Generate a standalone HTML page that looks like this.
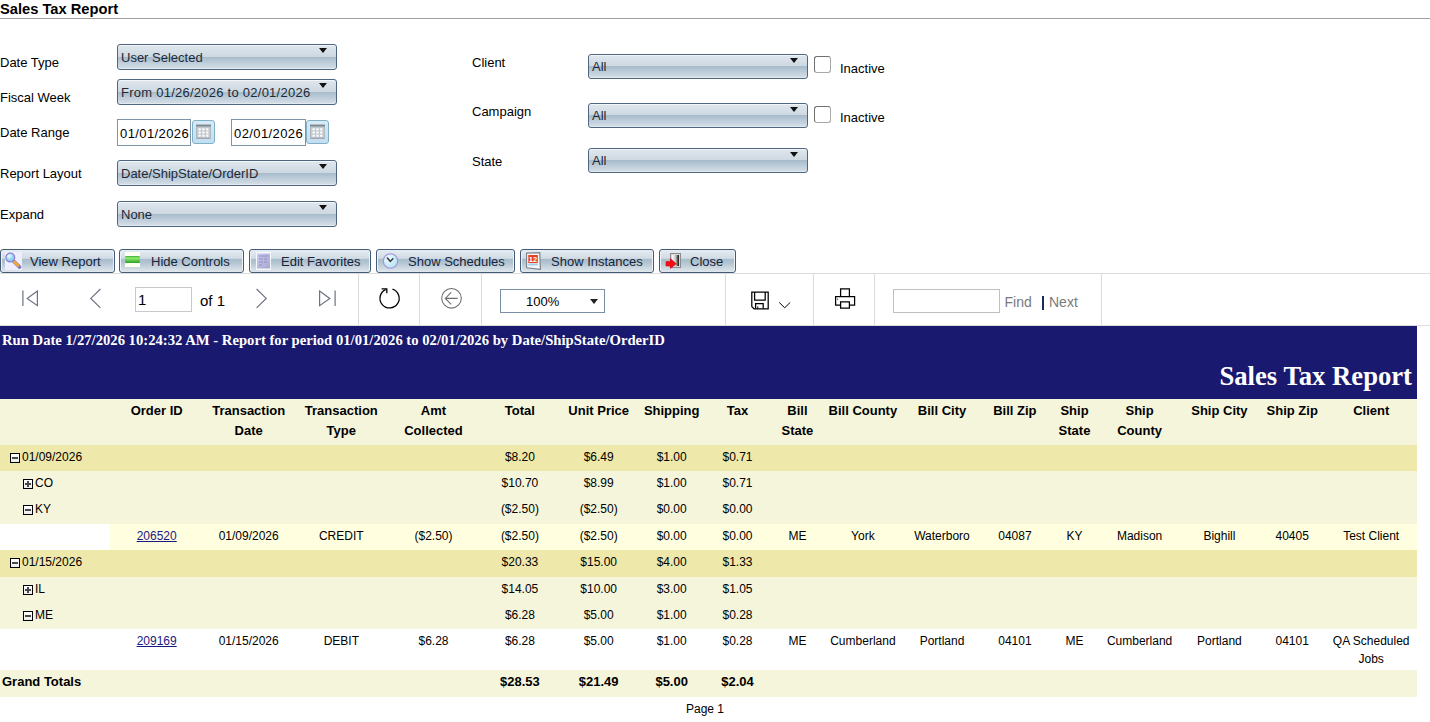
<!DOCTYPE html>
<html><head><meta charset="utf-8">
<style>
*{box-sizing:border-box;margin:0;padding:0}
html,body{width:1430px;height:722px;overflow:hidden;background:#fff;font-family:"Liberation Sans",sans-serif;color:#000}
.a{position:absolute}
.t{position:absolute;white-space:nowrap;line-height:1}
#title{left:0;top:2px;font-size:14.7px;font-weight:bold}
#hr{left:0;top:18px;width:1430px;height:1px;background:#a0a0a0}
.lbl{font-size:13px;color:#000}
.dd{position:absolute;height:26px;border:1px solid #4e6680;border-radius:3px;
 background:linear-gradient(#e0e7ee 0%,#cdd8e1 48%,#a7bbca 50%,#bfcedb 75%,#d5dfe7 100%);
 box-shadow:inset 0 1px 0 #f3f6f9, inset 0 -1px 0 #e3eaef;font-size:13px;color:#1e2a36}
.dd span{position:absolute;left:3px;top:6px;line-height:1;white-space:nowrap}
.dd.r{height:25px}.dd.r span{top:5px}
.dd i{position:absolute;right:9px;top:3px;width:0;height:0;border-left:4px solid transparent;border-right:4px solid transparent;border-top:5px solid #111}
.inp{position:absolute;height:27px;border:1px solid #7f93aa;background:#fff;font-size:13px}
.inp span{position:absolute;left:2px;top:7px;line-height:1;letter-spacing:0.4px}
.cal{position:absolute;width:23px;height:24px;border:1px solid #7fb0c9;border-radius:3px;background:linear-gradient(#d8eaf6,#c3def0)}
.cb{position:absolute;width:17px;height:17px;border:1px solid;border-color:#707070 #a8a8a8 #a8a8a8 #707070;border-radius:3px;background:#fff}
.btn{position:absolute;top:249px;height:24px;border:1px solid #435b76;border-radius:3px;
 background:linear-gradient(#e6ecf1 0%,#d0dbe4 38%,#a9bdcc 42%,#b2c4d2 58%,#d3dde5 88%,#e2e8ed 100%);box-shadow:inset 1px 0 0 #eef2f5, inset -1px 0 0 #eef2f5;font-size:13px;color:#16243a}
.btn span{position:absolute;top:5px;line-height:1;white-space:nowrap}
.sep{position:absolute;top:274px;width:1px;height:51px;background:#dcdcdc}
.row{position:absolute;left:0;width:1417px}
.c{position:absolute;width:120px;text-align:center;white-space:nowrap;line-height:1}
.hd{font-weight:bold;font-size:13px}
.dt{font-size:12px}
.ex{position:absolute;width:10px;height:10px;border:1px solid #000;background:linear-gradient(#fff,#ececec)}
.ex:before{content:"";position:absolute;left:1px;top:3px;width:6px;height:2px;background:#4a4a4a}
.ex.p:after{content:"";position:absolute;left:3px;top:1px;width:2px;height:6px;background:#4a4a4a}
</style></head><body>
<div id="title" class="t">Sales Tax Report</div>
<div id="hr" class="a"></div>

<!-- left labels -->
<div class="t lbl" style="left:0;top:56px">Date Type</div>
<div class="t lbl" style="left:0;top:91px">Fiscal Week</div>
<div class="t lbl" style="left:0;top:126px">Date Range</div>
<div class="t lbl" style="left:0;top:167px">Report Layout</div>
<div class="t lbl" style="left:0;top:208px">Expand</div>

<div class="dd" style="left:117px;top:44px;width:220px"><span>User Selected</span><i></i></div>
<div class="dd" style="left:117px;top:79px;width:220px"><span style="letter-spacing:0.25px">From 01/26/2026 to 02/01/2026</span><i></i></div>
<div class="inp" style="left:117px;top:119px;width:74px"><span>01/01/2026</span></div>
<div class="cal" style="left:192px;top:120px"><svg width="21" height="22" viewBox="0 0 21 22" style="position:absolute;left:0;top:0"><rect x="3" y="3.6" width="15" height="2.2" fill="#7c8690"/><rect x="3.5" y="5.8" width="14" height="11.5" fill="#c4cad0" stroke="#aab2ba" stroke-width="0.8"/><g fill="#fff"><rect x="5.5" y="7.3" width="2.3" height="2"/><rect x="9.3" y="7.3" width="2.3" height="2"/><rect x="13.1" y="7.3" width="2.3" height="2"/><rect x="5.5" y="10.5" width="2.3" height="2"/><rect x="9.3" y="10.5" width="2.3" height="2"/><rect x="13.1" y="10.5" width="2.3" height="2"/><rect x="5.5" y="13.7" width="2.3" height="2"/><rect x="9.3" y="13.7" width="2.3" height="2"/><rect x="13.1" y="13.7" width="2.3" height="2"/></g><path d="M3.5 17.3 H17.5" stroke="#98a2ac" stroke-width="1"/></svg></div>
<div class="inp" style="left:231px;top:119px;width:75px"><span>02/01/2026</span></div>
<div class="cal" style="left:306px;top:120px"><svg width="21" height="22" viewBox="0 0 21 22" style="position:absolute;left:0;top:0"><rect x="3" y="3.6" width="15" height="2.2" fill="#7c8690"/><rect x="3.5" y="5.8" width="14" height="11.5" fill="#c4cad0" stroke="#aab2ba" stroke-width="0.8"/><g fill="#fff"><rect x="5.5" y="7.3" width="2.3" height="2"/><rect x="9.3" y="7.3" width="2.3" height="2"/><rect x="13.1" y="7.3" width="2.3" height="2"/><rect x="5.5" y="10.5" width="2.3" height="2"/><rect x="9.3" y="10.5" width="2.3" height="2"/><rect x="13.1" y="10.5" width="2.3" height="2"/><rect x="5.5" y="13.7" width="2.3" height="2"/><rect x="9.3" y="13.7" width="2.3" height="2"/><rect x="13.1" y="13.7" width="2.3" height="2"/></g><path d="M3.5 17.3 H17.5" stroke="#98a2ac" stroke-width="1"/></svg></div>
<div class="dd" style="left:117px;top:160px;width:220px"><span>Date/ShipState/OrderID</span><i></i></div>
<div class="dd" style="left:117px;top:201px;width:220px"><span>None</span><i></i></div>

<!-- right labels -->
<div class="t lbl" style="left:472px;top:56px">Client</div>
<div class="t lbl" style="left:472px;top:105px">Campaign</div>
<div class="t lbl" style="left:472px;top:155px">State</div>
<div class="dd r" style="left:588px;top:54px;width:220px"><span>All</span><i></i></div>
<div class="dd r" style="left:588px;top:103px;width:220px"><span>All</span><i></i></div>
<div class="dd r" style="left:588px;top:148px;width:220px"><span>All</span><i></i></div>
<div class="cb" style="left:814px;top:56px"></div>
<div class="cb" style="left:814px;top:106px"></div>
<div class="t lbl" style="left:840px;top:62px">Inactive</div>
<div class="t lbl" style="left:840px;top:111px">Inactive</div>

<!-- buttons -->
<div class="btn" style="left:0;width:115px"><span style="left:29px">View Report</span></div>
<div class="btn" style="left:119px;width:125px"><span style="left:31px">Hide Controls</span></div>
<div class="btn" style="left:249px;width:122px"><span style="left:31px">Edit Favorites</span></div>
<div class="btn" style="left:376px;width:139px"><span style="left:31px">Show Schedules</span></div>
<div class="btn" style="left:520px;width:134px"><span style="left:30px">Show Instances</span></div>
<div class="btn" style="left:659px;width:77px"><span style="left:30px">Close</span></div>
<svg class="a" style="left:5px;top:252px" width="17" height="18" viewBox="0 0 17 18">
 <defs><radialGradient id="lg" cx="0.35" cy="0.3" r="0.8"><stop offset="0" stop-color="#f4fdff"/><stop offset="0.5" stop-color="#9fd8f4"/><stop offset="1" stop-color="#6cc0ea"/></radialGradient></defs>
 <rect width="17" height="18" fill="#eeeefd"/>
 <line x1="9" y1="9.5" x2="14.5" y2="15" stroke="#7c74c8" stroke-width="3.6" stroke-linecap="round"/>
 <line x1="9" y1="9.5" x2="13" y2="13.5" stroke="#f2a838" stroke-width="2.6" stroke-linecap="round"/>
 <circle cx="5.3" cy="5.6" r="4.4" fill="url(#lg)" stroke="#8a80d4" stroke-width="1.2"/>
</svg>
<svg class="a" style="left:125px;top:252px" width="15" height="15" viewBox="0 0 15 15">
 <defs><linearGradient id="gg" x1="0" y1="0" x2="0" y2="1"><stop offset="0" stop-color="#3cb030"/><stop offset="0.3" stop-color="#90ee70"/><stop offset="1" stop-color="#28a020"/></linearGradient></defs>
 <rect width="15" height="15" fill="#fffff2"/>
 <rect x="0" y="4" width="15" height="7" rx="1" fill="url(#gg)"/>
</svg>
<svg class="a" style="left:256px;top:252px" width="15" height="18" viewBox="0 0 15 18">
 <defs><linearGradient id="dg" x1="0" y1="0" x2="1" y2="1"><stop offset="0" stop-color="#c8c8f4"/><stop offset="1" stop-color="#a8a8cc"/></linearGradient></defs>
 <rect x="0" y="0" width="15" height="18" fill="#f6f8fc"/>
 <rect x="1" y="1.5" width="13" height="15" fill="url(#dg)"/>
 <path d="M3 4h9M3 7h4M8 7h3M3 10h4M8 10h3M3 13h3" stroke="#8c8cb8" stroke-width="0.9"/>
</svg>
<svg class="a" style="left:382px;top:252px" width="17" height="18" viewBox="0 0 17 18">
 <defs><radialGradient id="cg" cx="0.35" cy="0.35" r="0.8"><stop offset="0" stop-color="#f0fcff"/><stop offset="1" stop-color="#a8dcf4"/></radialGradient></defs>
 <circle cx="8.5" cy="9" r="7.2" fill="url(#cg)" stroke="#a494d6" stroke-width="1.1"/>
 <path d="M5.3 6 L8.3 9.3 L10.9 6.8" fill="none" stroke="#3a3a3a" stroke-width="1.5" stroke-linecap="round"/>
</svg>
<svg class="a" style="left:526px;top:252px" width="15" height="18" viewBox="0 0 15 18">
 <path d="M0.5 1.2 L13.8 0.6 L14.4 17.4 L0.6 15.8 Z" fill="#f4f6f8" stroke="#7e868e" stroke-width="1.2"/>
 <rect x="2.3" y="3" width="9.5" height="8" fill="#e04424"/>
 <text x="7" y="10" font-family="Liberation Sans" font-weight="bold" font-size="7.5" fill="#fff" text-anchor="middle">12</text>
 <rect x="2.3" y="11.5" width="9.5" height="2" fill="#a6cdea"/>
</svg>
<svg class="a" style="left:665px;top:253px" width="17" height="16" viewBox="0 0 17 16">
 <defs><linearGradient id="door" x1="0" y1="0" x2="1" y2="0"><stop offset="0" stop-color="#ffffff"/><stop offset="0.5" stop-color="#c8c8c8"/><stop offset="1" stop-color="#101010"/></linearGradient></defs>
 <rect x="5.5" y="0.5" width="10" height="14" fill="#d8d8dc" stroke="#8c8c90" stroke-width="1"/>
 <rect x="7" y="2" width="7" height="11" fill="url(#door)"/>
 <path d="M1 8.6 L5.4 8.6 L5.4 5.4 L11.2 10.8 L5.4 15.4 L5.4 13 L1 13 Z" fill="#f00e14" stroke="#e00010" stroke-width="0.6" stroke-linejoin="round"/>
</svg>

<!-- toolbar -->
<div class="a" style="left:0;top:273px;width:1430px;height:1px;background:#dcdcdc"></div>
<div class="a" style="left:0;top:325px;width:1430px;height:1px;background:#dcdcdc"></div>
<div class="sep" style="left:358px"></div>
<div class="sep" style="left:419px"></div>
<div class="sep" style="left:481px"></div>
<div class="sep" style="left:725px"></div>
<div class="sep" style="left:813px"></div>
<div class="sep" style="left:874px"></div>
<div class="sep" style="left:1101px"></div>
<svg class="a" style="left:0;top:274px" width="1101" height="51" viewBox="0 274 1101 51">
 <g fill="none" stroke="#6b7280" stroke-width="1.2">
  <path d="M22.9 290.6 V306"/>
  <path d="M37.4 291.1 L27.2 298.4 L37.4 305.7 Z"/>
  <path d="M100.4 289 L90.8 298.4 L100.4 307.9"/>
  <path d="M256.6 289 L266.2 298.4 L256.6 307.9"/>
  <path d="M319.6 291.1 L329.8 298.4 L319.6 305.7 Z"/>
  <path d="M335.1 290.6 V306"/>
 </g>
 <g fill="none" stroke="#000" stroke-width="1.3">
  <path d="M392.5 289.2 A9.6 9.6 0 1 1 385.6 289.6"/>
  <path d="M381.6 288.8 H386.8 V293.2"/>
 </g>
 <g fill="none" stroke="#6e6e6e" stroke-width="1.1">
  <circle cx="451.5" cy="298.3" r="9.8"/>
  <path d="M445.3 298.4 H457.6 M451.2 292.4 L445.3 298.4 L451.2 304.4"/>
 </g>
 <g fill="none" stroke="#000" stroke-width="1.25">
  <path d="M751.8 292 H768.2 V308.8 H754 L751.8 306.6 Z"/>
  <path d="M754.6 292 V300 H765.2 V292"/>
  <path d="M755.6 308.8 V303.6 H763.2 V308.8"/>
  <path d="M757.8 306.4 V308.8" stroke-width="1"/>
  <path d="M779.2 302.4 L784.7 307.8 L790.2 302.4" stroke-width="1"/>
  <path d="M840.6 296.2 V288.8 H849.4 V296.2"/>
  <path d="M840.6 305.2 H835.6 V296.6 H854.6 V305.2 H849.4"/>
  <path d="M840.6 301.8 H849.4 V308 H840.6 Z"/>
 </g>
 <circle cx="837.6" cy="299.2" r="0.7" fill="#c04020"/>
</svg>
<div class="a" style="left:135px;top:287px;width:57px;height:25px;border:1px solid #c8c8c8"></div>
<div class="t" style="left:138px;top:292px;font-size:15px">1</div>
<div class="t" style="left:200px;top:293px;font-size:15px">of 1</div>
<div class="a" style="left:500px;top:289px;width:105px;height:24px;border:1px solid #7a8ea6"></div>
<div class="t" style="left:526px;top:295px;font-size:13px">100%</div>
<div class="a" style="left:590px;top:299px;width:0;height:0;border-left:4px solid transparent;border-right:4px solid transparent;border-top:5px solid #222"></div>
<div class="a" style="left:893px;top:289px;width:107px;height:24px;border:1px solid #c0c0c0"></div>
<div class="t" style="left:1004.5px;top:295px;font-size:14px;color:#7a7a7a">Find</div>
<div class="a" style="left:1042px;top:296px;width:2px;height:14px;background:#1a2a5a"></div>
<div class="t" style="left:1049px;top:295px;font-size:14px;color:#7a7a7a">Next</div>

<!-- report -->
<div class="a" style="left:0;top:326px;width:1417px;height:73px;background:#191970"></div>
<div class="t" style="left:2px;top:333px;font-family:'Liberation Serif',serif;font-weight:bold;font-size:14.67px;color:#fff">Run Date 1/27/2026 10:24:32 AM - Report for period 01/01/2026 to 02/01/2026 by Date/ShipState/OrderID</div>
<div class="t" style="right:18px;top:363px;font-family:'Liberation Serif',serif;font-weight:bold;font-size:26.67px;color:#fff">Sales Tax Report</div>

<div class="row" style="top:399px;height:46px;background:#f5f5dc"></div>
<div class="row" style="top:445px;height:26px;background:#eee8aa"></div>
<div class="row" style="top:471px;height:53px;background:#f5f5dc"></div>
<div class="a" style="left:110px;top:524px;width:1307px;height:26px;background:#ffffe0"></div>
<div class="row" style="top:550px;height:27px;background:#eee8aa"></div>
<div class="row" style="top:577px;height:52px;background:#f5f5dc"></div>
<div class="row" style="top:670px;height:27px;background:#f5f5dc"></div>

<div class="c hd" style="left:96.7px;top:404px;line-height:20px;top:401px">Order ID</div>
<div class="c hd" style="left:188.7px;top:404px;line-height:20px;top:401px">Transaction<br>Date</div>
<div class="c hd" style="left:281.3px;top:404px;line-height:20px;top:401px">Transaction<br>Type</div>
<div class="c hd" style="left:373.5px;top:404px;line-height:20px;top:401px">Amt<br>Collected</div>
<div class="c hd" style="left:459.9px;top:404px;line-height:20px;top:401px">Total</div>
<div class="c hd" style="left:538.7px;top:404px;line-height:20px;top:401px">Unit Price</div>
<div class="c hd" style="left:611.7px;top:404px;line-height:20px;top:401px">Shipping</div>
<div class="c hd" style="left:677.5px;top:404px;line-height:20px;top:401px">Tax</div>
<div class="c hd" style="left:737.4px;top:404px;line-height:20px;top:401px">Bill<br>State</div>
<div class="c hd" style="left:802.9px;top:404px;line-height:20px;top:401px">Bill County</div>
<div class="c hd" style="left:882.0px;top:404px;line-height:20px;top:401px">Bill City</div>
<div class="c hd" style="left:954.9px;top:404px;line-height:20px;top:401px">Bill Zip</div>
<div class="c hd" style="left:1014.5px;top:404px;line-height:20px;top:401px">Ship<br>State</div>
<div class="c hd" style="left:1079.6px;top:404px;line-height:20px;top:401px">Ship<br>County</div>
<div class="c hd" style="left:1159.4px;top:404px;line-height:20px;top:401px">Ship City</div>
<div class="c hd" style="left:1232.2px;top:404px;line-height:20px;top:401px">Ship Zip</div>
<div class="c hd" style="left:1311.2px;top:404px;line-height:20px;top:401px">Client</div>
<div class="c dt" style="left:459.9px;top:452px;line-height:18px;top:448px">$8.20</div>
<div class="c dt" style="left:538.7px;top:452px;line-height:18px;top:448px">$6.49</div>
<div class="c dt" style="left:611.7px;top:452px;line-height:18px;top:448px">$1.00</div>
<div class="c dt" style="left:677.5px;top:452px;line-height:18px;top:448px">$0.71</div>
<div class="c dt" style="left:459.9px;top:478px;line-height:18px;top:474px">$10.70</div>
<div class="c dt" style="left:538.7px;top:478px;line-height:18px;top:474px">$8.99</div>
<div class="c dt" style="left:611.7px;top:478px;line-height:18px;top:474px">$1.00</div>
<div class="c dt" style="left:677.5px;top:478px;line-height:18px;top:474px">$0.71</div>
<div class="c dt" style="left:459.9px;top:504px;line-height:18px;top:500px">($2.50)</div>
<div class="c dt" style="left:538.7px;top:504px;line-height:18px;top:500px">($2.50)</div>
<div class="c dt" style="left:611.7px;top:504px;line-height:18px;top:500px">$0.00</div>
<div class="c dt" style="left:677.5px;top:504px;line-height:18px;top:500px">$0.00</div>
<div class="c dt" style="left:96.7px;top:531px;line-height:18px;top:527px"><u style="color:#1a1a80">206520</u></div>
<div class="c dt" style="left:188.7px;top:531px;line-height:18px;top:527px">01/09/2026</div>
<div class="c dt" style="left:281.3px;top:531px;line-height:18px;top:527px">CREDIT</div>
<div class="c dt" style="left:373.5px;top:531px;line-height:18px;top:527px">($2.50)</div>
<div class="c dt" style="left:459.9px;top:531px;line-height:18px;top:527px">($2.50)</div>
<div class="c dt" style="left:538.7px;top:531px;line-height:18px;top:527px">($2.50)</div>
<div class="c dt" style="left:611.7px;top:531px;line-height:18px;top:527px">$0.00</div>
<div class="c dt" style="left:677.5px;top:531px;line-height:18px;top:527px">$0.00</div>
<div class="c dt" style="left:737.4px;top:531px;line-height:18px;top:527px">ME</div>
<div class="c dt" style="left:802.9px;top:531px;line-height:18px;top:527px">York</div>
<div class="c dt" style="left:882.0px;top:531px;line-height:18px;top:527px">Waterboro</div>
<div class="c dt" style="left:954.9px;top:531px;line-height:18px;top:527px">04087</div>
<div class="c dt" style="left:1014.5px;top:531px;line-height:18px;top:527px">KY</div>
<div class="c dt" style="left:1079.6px;top:531px;line-height:18px;top:527px">Madison</div>
<div class="c dt" style="left:1159.4px;top:531px;line-height:18px;top:527px">Bighill</div>
<div class="c dt" style="left:1232.2px;top:531px;line-height:18px;top:527px">40405</div>
<div class="c dt" style="left:1311.2px;top:531px;line-height:18px;top:527px">Test Client</div>
<div class="c dt" style="left:459.9px;top:557px;line-height:18px;top:553px">$20.33</div>
<div class="c dt" style="left:538.7px;top:557px;line-height:18px;top:553px">$15.00</div>
<div class="c dt" style="left:611.7px;top:557px;line-height:18px;top:553px">$4.00</div>
<div class="c dt" style="left:677.5px;top:557px;line-height:18px;top:553px">$1.33</div>
<div class="c dt" style="left:459.9px;top:584px;line-height:18px;top:580px">$14.05</div>
<div class="c dt" style="left:538.7px;top:584px;line-height:18px;top:580px">$10.00</div>
<div class="c dt" style="left:611.7px;top:584px;line-height:18px;top:580px">$3.00</div>
<div class="c dt" style="left:677.5px;top:584px;line-height:18px;top:580px">$1.05</div>
<div class="c dt" style="left:459.9px;top:610px;line-height:18px;top:606px">$6.28</div>
<div class="c dt" style="left:538.7px;top:610px;line-height:18px;top:606px">$5.00</div>
<div class="c dt" style="left:611.7px;top:610px;line-height:18px;top:606px">$1.00</div>
<div class="c dt" style="left:677.5px;top:610px;line-height:18px;top:606px">$0.28</div>
<div class="c dt" style="left:96.7px;top:636px;line-height:18px;top:632px"><u style="color:#1a1a80">209169</u></div>
<div class="c dt" style="left:188.7px;top:636px;line-height:18px;top:632px">01/15/2026</div>
<div class="c dt" style="left:281.3px;top:636px;line-height:18px;top:632px">DEBIT</div>
<div class="c dt" style="left:373.5px;top:636px;line-height:18px;top:632px">$6.28</div>
<div class="c dt" style="left:459.9px;top:636px;line-height:18px;top:632px">$6.28</div>
<div class="c dt" style="left:538.7px;top:636px;line-height:18px;top:632px">$5.00</div>
<div class="c dt" style="left:611.7px;top:636px;line-height:18px;top:632px">$1.00</div>
<div class="c dt" style="left:677.5px;top:636px;line-height:18px;top:632px">$0.28</div>
<div class="c dt" style="left:737.4px;top:636px;line-height:18px;top:632px">ME</div>
<div class="c dt" style="left:802.9px;top:636px;line-height:18px;top:632px">Cumberland</div>
<div class="c dt" style="left:882.0px;top:636px;line-height:18px;top:632px">Portland</div>
<div class="c dt" style="left:954.9px;top:636px;line-height:18px;top:632px">04101</div>
<div class="c dt" style="left:1014.5px;top:636px;line-height:18px;top:632px">ME</div>
<div class="c dt" style="left:1079.6px;top:636px;line-height:18px;top:632px">Cumberland</div>
<div class="c dt" style="left:1159.4px;top:636px;line-height:18px;top:632px">Portland</div>
<div class="c dt" style="left:1232.2px;top:636px;line-height:18px;top:632px">04101</div>
<div class="c dt" style="left:1311.2px;top:636px;line-height:18px;top:632px">QA Scheduled<br>Jobs</div>
<div class="ex m" style="left:10px;top:453px"></div>
<div class="t dt" style="left:22px;top:451px">01/09/2026</div>
<div class="ex p" style="left:23px;top:479px"></div>
<div class="t dt" style="left:35px;top:477px">CO</div>
<div class="ex m" style="left:23px;top:505px"></div>
<div class="t dt" style="left:35px;top:503px">KY</div>
<div class="ex m" style="left:10px;top:558px"></div>
<div class="t dt" style="left:22px;top:556px">01/15/2026</div>
<div class="ex p" style="left:23px;top:585px"></div>
<div class="t dt" style="left:35px;top:583px">IL</div>
<div class="ex m" style="left:23px;top:611px"></div>
<div class="t dt" style="left:35px;top:609px">ME</div>
<div class="t" style="left:2px;top:675px;font-size:13px;font-weight:bold">Grand Totals</div>
<div class="c " style="left:459.9px;top:675px;font-size:13px;font-weight:bold">$28.53</div>
<div class="c " style="left:538.7px;top:675px;font-size:13px;font-weight:bold">$21.49</div>
<div class="c " style="left:611.7px;top:675px;font-size:13px;font-weight:bold">$5.00</div>
<div class="c " style="left:677.5px;top:675px;font-size:13px;font-weight:bold">$2.04</div>
<div class="t" style="left:686px;top:703px;font-size:12px">Page 1</div>
</body></html>
